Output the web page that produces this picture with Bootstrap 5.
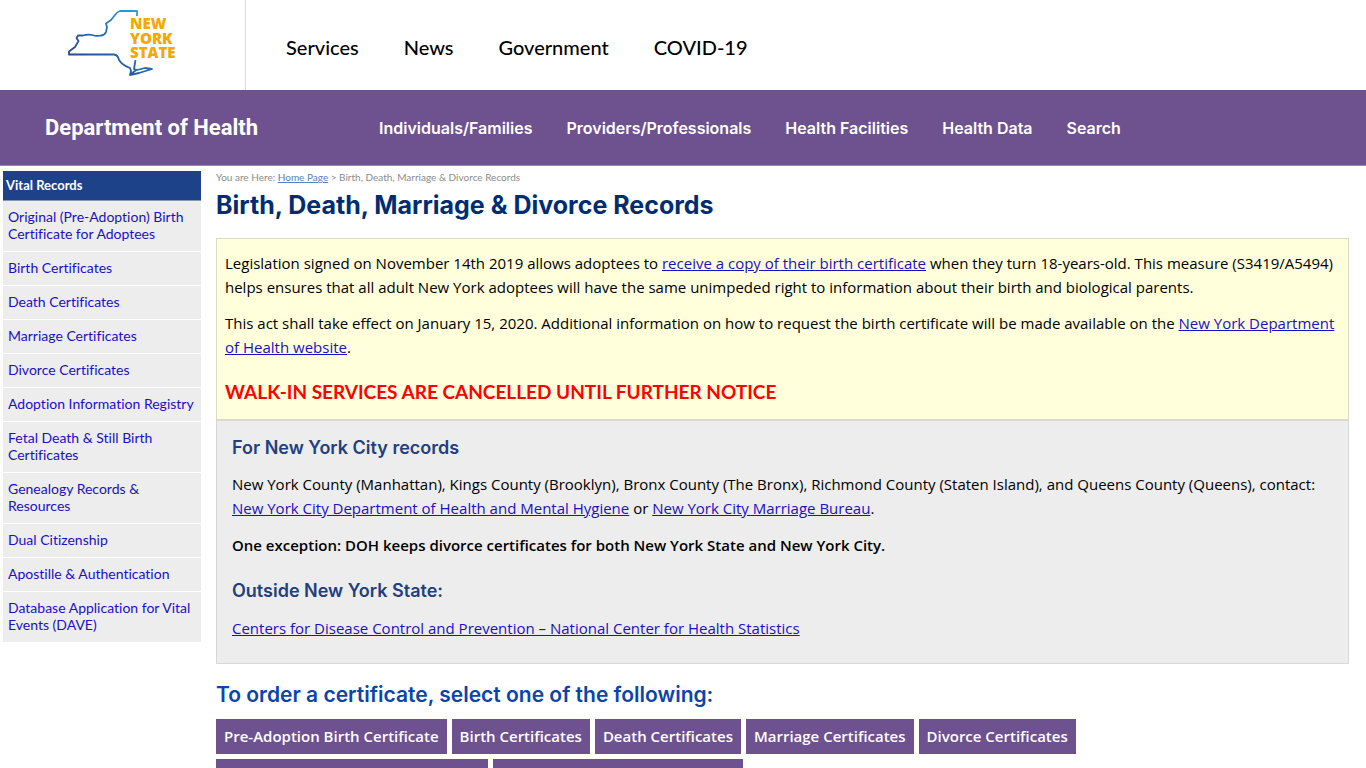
<!DOCTYPE html>
<html lang="en">
<head>
<meta charset="utf-8">
<meta name="viewport" content="width=device-width, initial-scale=1">
<title>Birth, Death, Marriage &amp; Divorce Records</title>
<link href="https://cdn.jsdelivr.net/npm/bootstrap@5.3.0/dist/css/bootstrap.min.css" rel="stylesheet">
<style>
body { font-family: "Open Sans", sans-serif; font-size: 15px; line-height: 24px; color: #000; background: #fff; }
a { color: #1b10c4; }
.ny-top { min-height: 90px; }
.ny-brand { width: 246px; border-right: 1px solid #ddd; padding-left: 64px; }
.ny-links { gap: 45px; padding-left: 40px; padding-top: 4px; }
.ny-links a { font: 500 20px/28px Lato, sans-serif; color: #000; text-decoration: none; }
.agency { background: #6e518f; min-height: 76px; border-bottom: 1px solid #9b8fa8; }
.agency-name { font: 700 22px/30px Roboto, sans-serif; color: #fff; text-decoration: none; width: 379px; padding-left: 45px; }
.agency-links { gap: 34px; }
.agency-links a { font: 600 16px/24px Inter, sans-serif; color: #fff; text-decoration: none; }
.side { width: 198px; margin-left: 3px; margin-top: 5px; font-family: Lato, sans-serif; font-variant-ligatures: none; }
.side h2 { font-size: 13px; line-height: 17px; font-weight: 700; color: #fff; background: #1d4289; padding: 6px 3px; margin: 0; border-bottom: 1px solid #8797b5; }
.side a { display: block; font-size: 14px; line-height: 17px; padding: 7px 5px 9px; background: #ededed; text-decoration: none; margin-bottom: 1px; }
.main-col { min-width: 0; padding: 3px 17px 24px 15px; }
.trail { font: 400 10px/16px Lato, sans-serif; color: #8c8c8c; }
.trail a { color: #5c80bd; }
.main-col h1 { font: 700 25px/32px Inter, sans-serif; color: #002d72; margin: 4px 0 17px; }
.notice { background: #ffffdc; border: 1px solid #d9dcc0; padding: 12px 8px 15px; }
.notice p { margin-bottom: 12px; }
.notice h2 { color: #f00; font: 700 19px/24px Lato, sans-serif; margin: 21px 0 0; }
.where { background: #ededed; border: 1px solid #d8d8d8; padding: 15px 15px 23px; }
.where h3 { font: 600 18px/24px Inter, sans-serif; color: #233f80; margin-bottom: 12px; }
.where p { margin-bottom: 13px; }
.where p + h3 { margin-top: 22px; margin-bottom: 13px; }
.order-title { font: 600 21px/28px Inter, sans-serif; color: #0b45a8; margin: 17px 0 10px; }
.orders { gap: 5px; }
.orders .btn { --bs-btn-bg: #6e518f; --bs-btn-color: #fff; --bs-btn-hover-bg: #5b4179; --bs-btn-hover-color: #fff; --bs-btn-border-radius: 0; --bs-btn-border-width: 0; --bs-btn-padding-x: 8px; --bs-btn-padding-y: 5px; --bs-btn-font-size: 15px; --bs-btn-font-weight: 600; line-height: 25px; }
.orders .btn-wide { min-width: 250px; }
.orders .btn-wider { min-width: 272px; }
</style>
</head>
<body>
<header>
  <div class="ny-top d-flex align-items-stretch">
    <a class="ny-brand flex-shrink-0 text-decoration-none" href="#" aria-label="New York State">
      <svg width="120" height="84" viewBox="64 0 120 84" aria-hidden="true">
        <defs><linearGradient id="ny" x1="0" y1="1" x2="1" y2="0"><stop offset="0" stop-color="#29397f"/><stop offset=".5" stop-color="#2766ad"/><stop offset="1" stop-color="#35a9dc"/></linearGradient></defs>
        <path d="M137 16V11H120Q117 12 115 15L111 20L106 23.500L107 27L106 32Q105 35 101 35.500Q97 36.500 92 35Q88 34 83 35.500L78 35.500L76.500 38L78.500 41L75 47L69 51.500V54.500H114Q118 55 119 60Q122 65 130 68L131 71L130 75L139 73L152 69L145 68L137 70L134 69L135.500 60M130 75L136 70" fill="none" stroke="url(#ny)" stroke-width="1.800" stroke-linejoin="round"/>
        <g fill="#f5a800" font-family="'Open Sans', sans-serif" font-weight="800" font-size="15"><text x="130" y="29">NEW</text><text x="130" y="44">YORK</text><text x="130" y="58">STATE</text></g>
      </svg>
    </a>
    <nav class="ny-links d-flex flex-wrap align-items-center" aria-label="New York State">
      <a href="#">Services</a><a href="#">News</a><a href="#">Government</a><a href="#">COVID-19</a>
    </nav>
  </div>
  <div class="agency d-flex align-items-center">
    <a class="agency-name flex-shrink-0" href="#">Department of Health</a>
    <nav class="agency-links d-flex flex-wrap" aria-label="Department of Health">
      <a href="#">Individuals/Families</a><a href="#">Providers/Professionals</a><a href="#">Health Facilities</a><a href="#">Health Data</a><a href="#">Search</a>
    </nav>
  </div>
</header>
<div class="d-flex align-items-start">
  <nav class="side flex-shrink-0" aria-labelledby="vr">
    <h2 id="vr">Vital Records</h2>
    <a href="#">Original (Pre-Adoption) Birth Certificate for Adoptees</a>
    <a href="#">Birth Certificates</a>
    <a href="#">Death Certificates</a>
    <a href="#">Marriage Certificates</a>
    <a href="#">Divorce Certificates</a>
    <a href="#">Adoption Information Registry</a>
    <a href="#">Fetal Death &amp; Still Birth Certificates</a>
    <a href="#">Genealogy Records &amp; Resources</a>
    <a href="#">Dual Citizenship</a>
    <a href="#">Apostille &amp; Authentication</a>
    <a href="#">Database Application for Vital Events (DAVE)</a>
  </nav>
  <main class="main-col flex-grow-1">
    <div class="trail">You are Here: <a href="#">Home Page</a> &gt; Birth, Death, Marriage &amp; Divorce Records</div>
    <h1>Birth, Death, Marriage &amp; Divorce Records</h1>
    <section class="notice">
      <p>Legislation signed on November 14th 2019 allows adoptees to <a href="#">receive a copy of their birth certificate</a> when they turn 18-years-old. This measure (S3419/A5494) helps ensures that all adult New York adoptees will have the same unimpeded right to information about their birth and biological parents.</p>
      <p>This act shall take effect on January 15, 2020. Additional information on how to request the birth certificate will be made available on the <a href="#">New York Department of Health website</a>.</p>
      <h2>WALK-IN SERVICES ARE CANCELLED UNTIL FURTHER NOTICE</h2>
    </section>
    <section class="where">
      <h3>For New York City records</h3>
      <p>New York County (Manhattan), Kings County (Brooklyn), Bronx County (The Bronx), Richmond County (Staten Island), and Queens County (Queens), contact: <a href="#">New York City Department of Health and Mental Hygiene</a> or <a href="#">New York City Marriage Bureau</a>.</p>
      <p class="fw-semibold">One exception: DOH keeps divorce certificates for both New York State and New York City.</p>
      <h3>Outside New York State:</h3>
      <p class="mb-0"><a href="#">Centers for Disease Control and Prevention – National Center for Health Statistics</a></p>
    </section>
    <h2 class="order-title">To order a certificate, select one of the following:</h2>
    <div class="orders d-flex flex-wrap">
      <a class="btn" href="#">Pre-Adoption Birth Certificate</a>
      <a class="btn" href="#">Birth Certificates</a>
      <a class="btn" href="#">Death Certificates</a>
      <a class="btn" href="#">Marriage Certificates</a>
      <a class="btn" href="#">Divorce Certificates</a>
      <a class="btn btn-wider" href="#">Genealogy Records &amp; Resources</a>
      <a class="btn btn-wide" href="#">Adoption Information Registry</a>
    </div>
  </main>
</div>
<script src="https://cdn.jsdelivr.net/npm/bootstrap@5.3.0/dist/js/bootstrap.bundle.min.js"></script>
</body>
</html>
